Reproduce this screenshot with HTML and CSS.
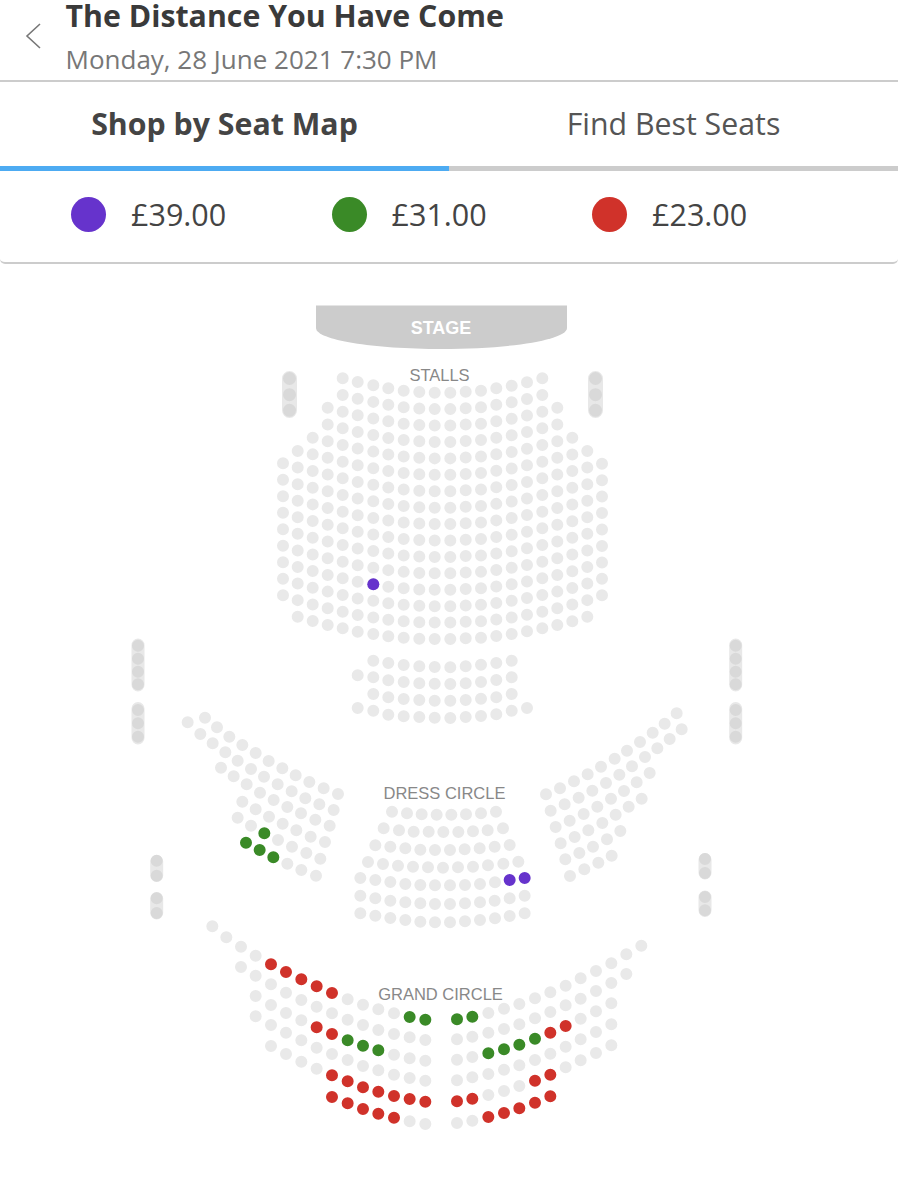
FILE: index.html
```html
<!DOCTYPE html>
<html lang="en">
<head>
<meta charset="utf-8">
<title>The Distance You Have Come</title>
<link rel="stylesheet" href="styles.css">
</head>
<body>
<header class="event">
  <svg class="back" viewBox="0 0 16 26" width="16" height="26"><path d="M15 1 2 13l13 12"/></svg>
  <div class="event-text">
    <h1 class="event-title">The Distance You Have Come</h1>
    <p class="event-date">Monday, 28 June 2021 7:30 PM</p>
  </div>
</header>
<nav class="tabs">
  <div class="tab tab-active">Shop by Seat Map</div>
  <div class="tab">Find Best Seats</div>
</nav>
<section class="legend">
  <div class="price"><span class="swatch swatch-purple"></span>£39.00</div>
  <div class="price"><span class="swatch swatch-green"></span>£31.00</div>
  <div class="price"><span class="swatch swatch-red"></span>£23.00</div>
</section>
<svg class="map" viewBox="0 264 898 936" width="898" height="936">
  <path class="stage" d="M316 305.5H567V328C567 340 510 349 441.500 349C373 349 316 340 316 328Z"/>
  <text class="stage-label" x="441" y="334">STAGE</text>
  <text class="map-label" x="439.500" y="381">STALLS</text>
  <text class="map-label" x="444.500" y="799">DRESS CIRCLE</text>
  <text class="map-label" x="440.500" y="1000">GRAND CIRCLE</text>

  <!-- boxes -->
  <g class="boxes">
    <path class="box-bar" d="M289.500 378.500V410.500M595.500 378.500V410.500"/>
    <path class="box-seat" d="M289.500 378.500h0M289.500 394.700h0M289.500 410.300h0M595.500 378.500h0M595.500 394.700h0M595.500 410.300h0"/>
    <path class="box-bar small" d="M138 645V685M138 708.500V738M735.700 645V685M735.700 708.500V738M156.700 861.500V875.500M156.700 898.500V913M705 859.500V873M705 897V910.500"/>
    <path class="box-seat small" d="M138 645.700h0M138 658.700h0M138 671.700h0M138 684.300h0M138 710h0M138 723.300h0M138 736.700h0M735.700 645.700h0M735.700 658.700h0M735.700 671.700h0M735.700 684.300h0M735.700 710h0M735.700 723.300h0M735.700 736.700h0M156.700 860.700h0M156.700 875.700h0M156.700 898.300h0M156.700 913h0M705 859h0M705 873h0M705 897h0M705 910.300h0"/>
  </g>

  <!-- stalls, one line of dots per column -->
  <g class="seat free">
    <path stroke-dasharray="0 16.5" d="M283 463.300V595.500"/>
    <path stroke-dasharray="0 16.57" d="M297.700 451V617"/>
    <path stroke-dasharray="0 16.67" d="M312.700 437.700V621.200"/>
    <path stroke-dasharray="0 16.72" d="M327.700 407.700V625.200"/>
    <path stroke-dasharray="0 16.67" d="M342.700 378.300V628.500"/>
    <path stroke-dasharray="0 16.65" d="M357.700 382V632"/>
    <path stroke-dasharray="0 16.58" d="M373.300 385.300V634.200"/>
    <path stroke-dasharray="0 16.53" d="M388.300 388.300V636.500"/>
    <path stroke-dasharray="0 16.47" d="M403.700 390.700V638"/>
    <path stroke-dasharray="0 16.45" d="M419.300 392V639"/>
    <path stroke-dasharray="0 16.42" d="M434.700 392.700V639.300"/>
    <path stroke-dasharray="0 16.42" d="M450.300 392.700V639.300"/>
    <path stroke-dasharray="0 16.44" d="M465.700 391.700V638.500"/>
    <path stroke-dasharray="0 16.47" d="M481 390.700V638"/>
    <path stroke-dasharray="0 16.51" d="M496.300 388.300V636.200"/>
    <path stroke-dasharray="0 16.55" d="M511.700 385.700V634.200"/>
    <path stroke-dasharray="0 16.6" d="M527 382.300V631.500"/>
    <path stroke-dasharray="0 16.67" d="M542.300 378.300V628.500"/>
    <path stroke-dasharray="0 16.72" d="M557.300 407.700V625.200"/>
    <path stroke-dasharray="0 16.69" d="M572.300 437.700V621.500"/>
    <path stroke-dasharray="0 16.57" d="M587.300 451V617"/>
    <path stroke-dasharray="0 16.45" d="M602 463.700V595.500"/>
  </g>
  <g class="seat purple"><path d="M373.300 584.300h0"/></g>

  <!-- rear stalls -->
  <g class="seat free">
    <path d="M373.300 660.700h0M373.300 677.300h0M373.300 694h0M373.300 710.700h0M388.300 663h0M388.300 680.300h0M388.300 697.300h0M388.300 714.700h0M403.700 665h0M403.700 682h0M403.700 699h0M403.700 716.300h0M419.300 666.300h0M419.300 683.300h0M419.300 700h0M419.300 717h0M434.700 667h0M434.700 683.700h0M434.700 700.700h0M434.700 717.700h0M450.300 667.300h0M450.300 684h0M450.300 700.700h0M450.300 718h0M465.700 666.300h0M465.700 683.300h0M465.700 700h0M465.700 717h0M481 664.700h0M481 682h0M481 698.700h0M481 716h0M496.300 663h0M496.300 680h0M496.300 697.300h0M496.300 714.300h0M511.700 660.700h0M511.700 677.300h0M511.700 694h0M511.700 710.700h0M357.700 675.300h0M357.700 708h0M527 708h0"/>
  </g>

  <!-- dress circle, left wing -->
  <g class="seat x3" transform="translate(120 630) scale(.33333)">
    <path class="free" d="M255 263h0M291 292h0M328 320h0M367 345h0M407 369h0M446 393h0M487 415h0M527 436h0M568 456h0M611 475h0M654 492h0M203 277h0M241 312h0M278 340h0M316 367h0M353 392h0M393 417h0M432 440h0M473 463h0M515 484h0M556 505h0M598 523h0M641 540h0M303 413h0M341 439h0M380 463h0M420 488h0M461 510h0M502 531h0M543 550h0M586 569h0M629 587h0M367 515h0M407 538h0M447 560h0M488 581h0M529 601h0M572 620h0M615 636h0M353 563h0M393 587h0M474 630h0M516 650h0M559 669h0M601 686h0M502 701h0M544 720h0M588 737h0"/>
    <path class="green" d="M433 610h0M378 638h0M419 660h0M460 682h0"/>
  </g>

  <!-- dress circle, right wing -->
  <g class="seat x3" transform="translate(530 630) scale(.33333)">
    <path class="free" d="M440 250h0M404 281h0M368 308h0M330 336h0M291 362h0M254 386h0M213 410h0M173 433h0M132 454h0M90 475h0M48 493h0M455 298h0M419 327h0M382 355h0M345 381h0M306 409h0M268 434h0M228 459h0M187 482h0M146 503h0M104 523h0M62 542h0M359 429h0M320 457h0M282 483h0M243 506h0M202 530h0M161 552h0M119 572h0M77 591h0M335 506h0M296 530h0M257 554h0M217 579h0M175 601h0M134 621h0M92 640h0M271 603h0M231 628h0M189 650h0M148 669h0M106 688h0M245 677h0M205 698h0M163 718h0M120 738h0"/>
  </g>

  <!-- dress circle, centre -->
  <g class="seat x3" transform="translate(350 780) scale(.33333)">
    <path class="free" d="M126 95h0M171 100h0M215 103h0M260 104h0M304 104h0M348 103h0M393 100h0M438 95h0M101 145h0M147 151h0M191 155h0M236 155h0M280 156h0M325 156h0M369 154h0M413 151h0M459 145h0M76 196h0M121 200h0M166 205h0M211 209h0M255 210h0M300 210h0M344 208h0M389 205h0M434 200h0M479 195h0M54 246h0M99 252h0M144 257h0M189 260h0M234 262h0M279 263h0M324 262h0M369 260h0M414 256h0M460 251h0M505 245h0M31 294h0M76 300h0M121 306h0M166 312h0M211 315h0M255 316h0M300 316h0M345 315h0M390 312h0M435 307h0M31 347h0M76 355h0M121 362h0M166 367h0M211 370h0M255 372h0M300 372h0M345 370h0M390 367h0M434 362h0M479 355h0M524 347h0M31 400h0M76 407h0M121 414h0M166 420h0M211 425h0M255 427h0M300 427h0M345 424h0M390 420h0M435 415h0M479 408h0M524 400h0"/>
    <path class="purple" d="M479 300h0M524 294h0"/>
  </g>

  <!-- grand circle, left -->
  <g class="seat x3" transform="translate(195 915) scale(.33333)">
    <path class="free" d="M52 34h0M94 67h0M138 95h0M182 122h0M458 253h0M504 269h0M550 283h0M597 295h0M138 156h0M182 182h0M228 208h0M273 233h0M319 255h0M365 275h0M411 295h0M458 314h0M504 330h0M550 345h0M597 357h0M644 367h0M691 375h0M182 243h0M228 270h0M273 294h0M319 316h0M597 419h0M644 430h0M691 437h0M182 304h0M228 330h0M273 353h0M319 376h0M365 398h0M411 417h0M458 435h0M504 453h0M550 466h0M597 479h0M644 489h0M691 497h0M228 393h0M273 417h0M319 440h0M365 461h0M644 619h0M691 627h0"/>
    <path class="red" d="M228 148h0M273 171h0M319 193h0M365 214h0M411 234h0M365 337h0M411 357h0M411 481h0M458 499h0M504 517h0M550 530h0M597 543h0M644 552h0M691 560h0M411 546h0M458 565h0M504 582h0M550 596h0M597 608h0"/>
    <path class="green" d="M644 306h0M691 314h0M458 376h0M504 392h0M550 406h0"/>
  </g>

  <!-- grand circle, right -->
  <g class="seat x3" transform="translate(430 930) scale(.33333)">
    <path class="free" d="M175 249h0M222 236h0M268 222h0M315 205h0M361 187h0M407 167h0M452 145h0M498 123h0M544 100h0M589 73h0M634 47h0M81 328h0M127 320h0M175 308h0M222 297h0M268 283h0M315 265h0M361 246h0M407 226h0M452 206h0M498 183h0M544 159h0M589 132h0M81 389h0M127 381h0M452 266h0M498 244h0M544 220h0M81 451h0M127 442h0M175 432h0M222 419h0M268 406h0M315 390h0M361 371h0M407 350h0M452 328h0M498 306h0M544 283h0M175 495h0M222 483h0M268 468h0M407 412h0M452 391h0M498 369h0M544 346h0M81 579h0M127 572h0"/>
    <path class="green" d="M81 268h0M127 260h0M175 370h0M222 358h0M268 344h0M315 326h0"/>
    <path class="red" d="M361 308h0M407 288h0M81 514h0M127 506h0M315 452h0M361 434h0M175 561h0M222 549h0M268 535h0M315 518h0M361 499h0"/>
  </g>
</svg>
</body>
</html>
```

FILE: styles.css
```css
* { box-sizing: border-box; }

html, body {
  margin: 0;
  padding: 0;
  background: #fff;
}

body {
  width: 898px;
  height: 1200px;
  overflow: hidden;
  font-family: "Open Sans", "Liberation Sans", sans-serif;
  color: #444;
}

.event {
  display: flex;
  align-items: center;
  gap: 24.500px;
  height: 82px;
  padding-left: 25px;
  border-bottom: 2px solid #ccc;
}

.back {
  flex: none;
  margin-bottom: 8px;
}

.back path {
  fill: none;
  stroke: #777;
  stroke-width: 1.6;
}

.event-text {
  align-self: flex-start;
}

.event-title {
  margin: 0;
  font-size: 30.300px;
  line-height: 32px;
  font-weight: 700;
  color: #3a3a3a;
  white-space: nowrap;
}

.event-date {
  margin: 11px 0 0;
  font-size: 26px;
  line-height: 32px;
  color: #777;
  white-space: nowrap;
}

.tabs {
  display: grid;
  grid-template-columns: 449px 449px;
  height: 89px;
}

.tab {
  display: flex;
  align-items: center;
  justify-content: center;
  padding-bottom: 2px;
  font-size: 30.300px;
  color: #555;
  border-bottom: 5px solid #ccc;
}

.tab-active {
  font-weight: 700;
  color: #444;
  border-bottom-color: #4dabf2;
}

.legend {
  display: grid;
  grid-template-columns: repeat(3, 260.500px);
  align-items: center;
  height: 93px;
  padding-left: 71px;
  padding-bottom: 5px;
  border-bottom: 2px solid #ccc;
  border-radius: 0 0 5px 5px;
}

.price {
  display: flex;
  align-items: center;
  gap: 25px;
  font-size: 30.500px;
  line-height: 36px;
  color: #444;
}

.swatch {
  width: 35px;
  height: 35px;
  border-radius: 50%;
}

.swatch-purple { background: #6633cc; }
.swatch-green { background: #3a8a27; }
.swatch-red { background: #d0322a; }

.map {
  display: block;
}

.stage { fill: #ccc; }

.stage-label,
.map-label {
  font-family: "Liberation Sans", Arial, sans-serif;
  text-anchor: middle;
}

.stage-label {
  font-size: 18px;
  font-weight: 700;
  fill: #fff;
}

.map-label {
  font-size: 16.500px;
  fill: #888;
}

.seat,
.seat path,
.boxes path {
  fill: none;
  stroke-linecap: round;
}

.seat { stroke-width: 12; }
.x3 { stroke-width: 36; }

.free, .seat .free { stroke: #e9e9e9; }
.purple, .seat .purple { stroke: #6633cc; }
.green, .seat .green { stroke: #3a8a27; }
.red, .seat .red { stroke: #d0322a; }

.box-bar {
  stroke: #e8e8e8;
  stroke-width: 15;
}

.box-seat {
  stroke: #d9d9d9;
  stroke-width: 13;
}

.box-bar.small { stroke-width: 13; }
.box-seat.small { stroke-width: 12; }
```
